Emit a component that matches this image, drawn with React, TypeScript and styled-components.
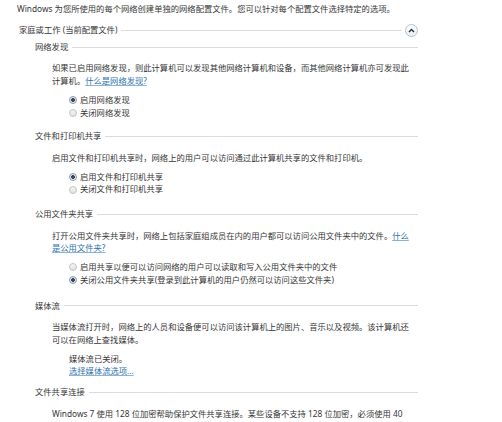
import styled, { createGlobalStyle } from "styled-components";

const GlobalStyle = createGlobalStyle`
  html, body {
    margin: 0;
    padding: 0;
    background: #ffffff;
  }
  body {
    font-family: "Noto Sans", "Noto Sans CJK SC", sans-serif;
    font-size: 8.3px;
    line-height: 12.7px;
    color: #363636;
  }
`;

const Page = styled.div`
  width: 401px;
  padding: 3px 0 0 17px;
  white-space: nowrap;
`;

const Intro = styled.div`
  margin-bottom: 8px;
`;

const HeaderRow = styled.div<{ $indent: number }>`
  display: flex;
  align-items: center;
  padding-left: ${(p) => p.$indent}px;
`;

const Title = styled.span`
  flex: none;
`;

const Rule = styled.div`
  flex: 1;
  height: 1px;
  margin-left: 4px;
  background: #dcdcdc;
`;

const Toggle = styled.button`
  flex: none;
  width: 13px;
  height: 13px;
  margin-left: 3px;
  padding: 0;
  border: 1px solid #b8c2ca;
  border-radius: 50%;
  background: linear-gradient(#ffffff, #e9eef2);
  display: flex;
  align-items: center;
  justify-content: center;
`;

const Section = styled.section<{ $gap: number }>`
  margin-top: ${(p) => p.$gap}px;
`;

const Body = styled.div`
  padding-left: 35px;
  margin-top: 9px;
`;

const Link = styled.a`
  color: #2f72ad;
  text-decoration: underline;
  text-decoration-color: #8fb3d3;
  cursor: pointer;
`;

const Block = styled.div`
  padding-left: 17px;
  margin-top: 6px;
`;

const RadioRow = styled.label`
  display: flex;
  align-items: center;
  gap: 3px;
`;

const Radio = styled.span<{ $checked?: boolean }>`
  width: 6px;
  height: 6px;
  border-radius: 50%;
  border: 1px solid ${(p) => (p.$checked ? "#8a98a6" : "#c4c4c4")};
  background: ${(p) =>
    p.$checked
      ? "radial-gradient(circle, #34495e 0 1.6px, #e6ebef 2.2px)"
      : "linear-gradient(#f4f4f4, #e2e2e2)"};
`;

const Header = ({ text }: { text: string }) => (
  <HeaderRow $indent={18}>
    <Title>{text}</Title>
    <Rule />
  </HeaderRow>
);

const Option = ({ label, checked }: { label: string; checked?: boolean }) => (
  <RadioRow>
    <Radio $checked={checked} />
    <span>{label}</span>
  </RadioRow>
);

export default function App() {
  return (
    <>
      <GlobalStyle />
      <Page>
        <Intro>Windows 为您所使用的每个网络创建单独的网络配置文件。您可以针对每个配置文件选择特定的选项。</Intro>
        <HeaderRow $indent={2}>
          <Title>家庭或工作 (当前配置文件)</Title>
          <Rule />
          <Toggle aria-label="折叠">
            <svg width="7" height="5" viewBox="0 0 7 5">
              <path d="M1 4 L3.5 1.5 L6 4" fill="none" stroke="#1f2f45" strokeWidth="1.4" />
            </svg>
          </Toggle>
        </HeaderRow>

        <Section $gap={4}>
          <Header text="网络发现" />
          <Body>
            <div>
              如果已启用网络发现，则此计算机可以发现其他网络计算机和设备，而其他网络计算机亦可发现此
              <br />
              计算机。<Link>什么是网络发现?</Link>
            </div>
            <Block>
              <Option label="启用网络发现" checked />
              <Option label="关闭网络发现" />
            </Block>
          </Body>
        </Section>

        <Section $gap={11}>
          <Header text="文件和打印机共享" />
          <Body>
            <div>启用文件和打印机共享时，网络上的用户可以访问通过此计算机共享的文件和打印机。</div>
            <Block>
              <Option label="启用文件和打印机共享" checked />
              <Option label="关闭文件和打印机共享" />
            </Block>
          </Body>
        </Section>

        <Section $gap={12}>
          <Header text="公用文件夹共享" />
          <Body>
            <div>
              打开公用文件夹共享时，网络上包括家庭组成员在内的用户都可以访问公用文件夹中的文件。<Link>什么</Link>
              <br />
              <Link>是公用文件夹?</Link>
            </div>
            <Block>
              <Option label="启用共享以便可以访问网络的用户可以读取和写入公用文件夹中的文件" />
              <Option label="关闭公用文件夹共享(登录到此计算机的用户仍然可以访问这些文件夹)" checked />
            </Block>
          </Body>
        </Section>

        <Section $gap={13}>
          <Header text="媒体流" />
          <Body>
            <div>
              当媒体流打开时，网络上的人员和设备便可以访问该计算机上的图片、音乐以及视频。该计算机还
              <br />
              可以在网络上查找媒体。
            </div>
            <Block>
              <div>媒体流已关闭。</div>
              <Link>选择媒体流选项...</Link>
            </Block>
          </Body>
        </Section>

        <Section $gap={8}>
          <Header text="文件共享连接" />
          <Body>
            <div>Windows 7 使用 128 位加密帮助保护文件共享连接。某些设备不支持 128 位加密，必须使用 40</div>
          </Body>
        </Section>
      </Page>
    </>
  );
}
